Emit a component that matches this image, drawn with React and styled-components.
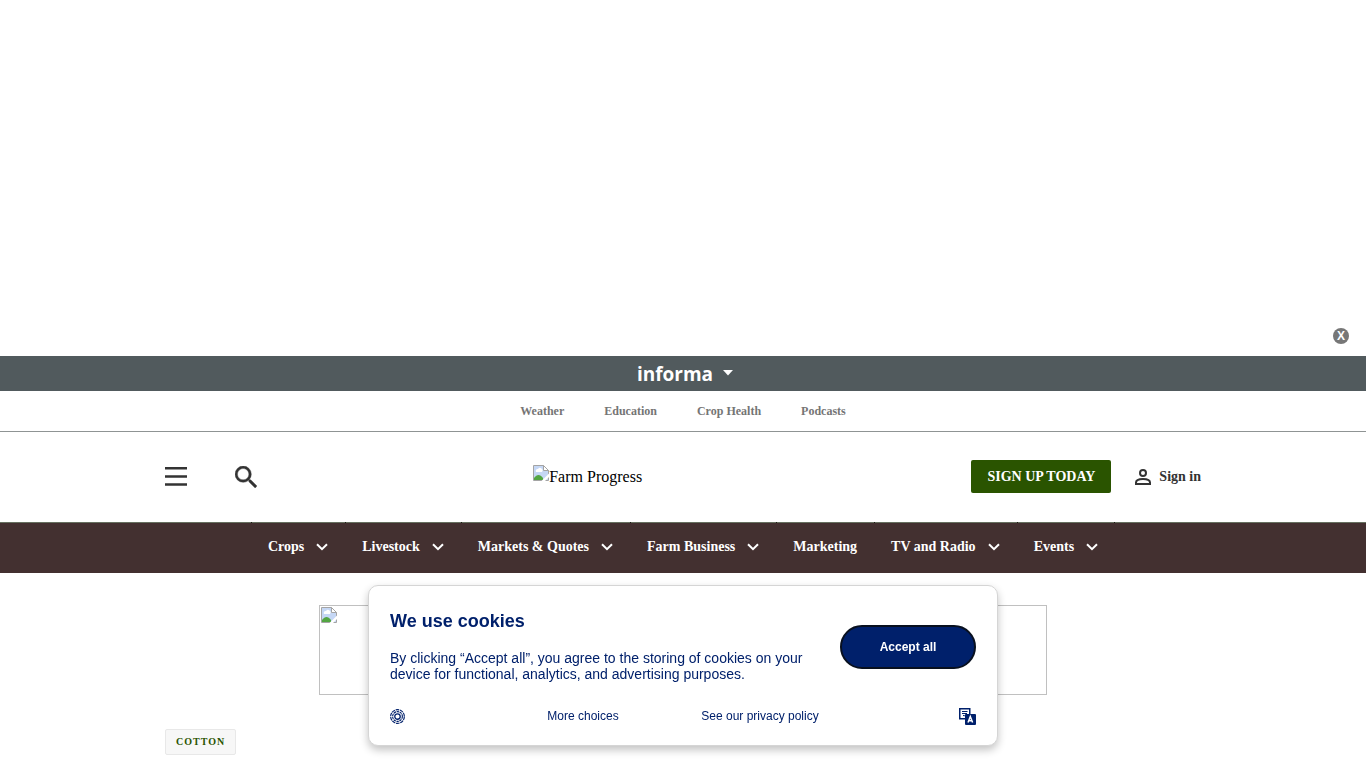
import React, { useState } from "react";
import styled, { createGlobalStyle } from "styled-components";

const GlobalStyle = createGlobalStyle`
  * {
    box-sizing: border-box;
  }
  body {
    margin: 0;
    background: #fff;
    color: #000;
    font-family: "Liberation Serif", serif;
    font-size: 16px;
  }
  a {
    color: inherit;
    text-decoration: none;
  }
  button {
    margin: 0;
    padding: 0;
    border: 0;
    background: none;
    color: inherit;
    font: inherit;
    cursor: pointer;
  }
  svg {
    display: block;
    flex: none;
  }
`;

const Billboard = styled.aside`
  display: flex;
  align-items: flex-end;
  justify-content: flex-end;
  min-height: 356px;
  padding: 12px 17px;
`;

const CloseButton = styled.button`
  width: 16px;
  height: 16px;
  border-radius: 50%;
  background: #777;
  color: #fff;
  font-family: "Liberation Sans", sans-serif;
  font-size: 12px;
  font-weight: 700;
  line-height: 16px;
  text-align: center;
`;

const InformaBar = styled.div`
  display: flex;
  justify-content: center;
  background: #515a5d;
  color: #fff;
`;

const InformaToggle = styled.button`
  display: flex;
  align-items: center;
  gap: 10px;
  height: 35px;
  padding-left: 4px;
  font-family: "Open Sans", sans-serif;
  font-size: 19px;
  font-weight: 700;
  line-height: 34px;
`;

const TopLinks = styled.nav`
  display: flex;
  justify-content: center;
  gap: 40px;
  border-bottom: 1px solid #8f9494;
  color: #757575;
  font-size: 12px;
  font-weight: 700;
  line-height: 40px;
`;

const Container = styled.div`
  max-width: 1036px;
  margin: 0 auto;
`;

const Header = styled(Container)`
  display: flex;
  align-items: center;
  justify-content: space-between;
  padding: 28px 0 29px;
`;

const HeaderGroup = styled.div`
  display: flex;
  align-items: center;
  gap: ${props => props.gap};
  color: #333;
`;

const LogoLink = styled.a`
  display: flex;
  width: 162px;
  line-height: 24px;
`;

const SignUp = styled.a`
  padding: 0 16px;
  border-radius: 2px;
  background: #2a5400;
  color: #fff;
  font-size: 14px;
  font-weight: 700;
  line-height: 33px;
`;

const SignIn = styled.a`
  display: flex;
  align-items: center;
  gap: 8px;
  font-size: 14px;
  font-weight: 700;
`;

const MainNav = styled.nav`
  display: flex;
  justify-content: center;
  border-top: 1px solid #66705f;
  background: #433030;
  color: #fff;
`;

const NavItem = styled.div`
  position: relative;
  display: flex;
  align-items: center;
  gap: 12px;
  padding: 0 17px 2px;
  font-size: 14px;
  font-weight: 700;
  line-height: 48px;
  &::before,
  &:last-child::after {
    content: "";
    position: absolute;
    top: -1px;
    left: 0;
    width: 1px;
    height: 1px;
    background: #1d1a14;
  }
  &:last-child::after {
    right: 0;
    left: auto;
  }
`;

const Leaderboard = styled.div`
  max-width: 728px;
  height: 90px;
  margin: 32px auto 34px;
  padding: 1px;
  border: 1px solid #c0c0c0;
`;

const Tag = styled.a`
  display: inline-block;
  padding: 0 10px;
  border: 1px solid #e8e8e8;
  border-radius: 2px;
  background: #f7f7f7;
  color: #2a5400;
  font-size: 10px;
  font-weight: 700;
  letter-spacing: 1px;
  line-height: 24px;
`;

const CookieDialog = styled.section`
  position: fixed;
  bottom: 22px;
  left: 50%;
  width: 630px;
  max-width: 100%;
  padding: 21px 21px 20px;
  transform: translateX(-50%);
  border: 1px solid #d5d5d5;
  border-radius: 10px;
  background: #fff;
  box-shadow: 0 4px 8px rgba(0, 0, 0, 0.24);
  color: #00206b;
  font-family: "Liberation Sans", sans-serif;
`;

const CookieBody = styled.div`
  display: flex;
  align-items: center;
  justify-content: space-between;
  min-height: 80px;
`;

const CookieText = styled.div`
  align-self: flex-start;
  max-width: 430px;
  h2 {
    margin: 0 0 15px;
    font-size: 18px;
    font-weight: 700;
    line-height: 28px;
  }
  p {
    margin: 0;
    font-size: 14px;
    line-height: 16px;
  }
`;

const AcceptButton = styled.button`
  width: 136px;
  height: 44px;
  border: 2px solid #08101f;
  border-radius: 22px;
  background: #00206b;
  color: #fff;
  font-size: 12px;
  font-weight: 700;
`;

const CookieFooter = styled.div`
  display: grid;
  grid-template-columns: 116px 154px 200px 1fr;
  align-items: center;
  margin-top: 20px;
  font-size: 12px;
  line-height: 18px;
`;

const FooterAction = styled.button`
  justify-self: ${props => props.$align || "center"};
`;

const PolicyLink = styled.a`
  justify-self: center;
`;

const Chevron = () => (
  <svg width="12" height="9" viewBox="0 0 12 9" fill="none">
    <path d="M1 1.200 6 6.200 11 1.200" stroke="#fff" strokeWidth="2" />
  </svg>
);

const BrokenImage = () => (
  <svg width="16" height="16" viewBox="0 0 16 16">
    <path d="M.5 .5h10l5 5v10H.5z" fill="#c5d7f5" stroke="#a4a4a4" />
    <path d="M3 7a2 2 0 0 1 2-3 2.500 2.500 0 0 1 4 3z" fill="#fff" />
    <path d="M1 15v-2c3-4 6-4 9 0v2z" fill="#53a642" />
    <path d="M10.500 .5v5h5z" fill="#fff" stroke="#a4a4a4" />
    <path d="M16 8.500 8.500 16H12l4-4z" fill="#fff" />
  </svg>
);

const MenuIcon = () => (
  <svg width="22" height="19" viewBox="0 0 22 19" fill="#333">
    <path d="M0 0h22v2.500H0zM0 8.200h22v2.500H0zM0 16.300h22v2.500H0z" />
  </svg>
);

const SearchIcon = () => (
  <svg width="22" height="22" viewBox="3 3 17.500 17.500" fill="#333" stroke="#333" strokeWidth=".3">
    <path d="M15.500 14h-.79l-.28-.27A6.471 6.471 0 0 0 16 9.500 6.500 6.500 0 1 0 9.500 16c1.610 0 3.090-.59 4.230-1.570l.27.28v.79l5 4.990L20.490 19l-4.990-5zm-6 0C7.010 14 5 11.990 5 9.500S7.010 5 9.500 5 14 7.010 14 9.500 11.990 14 9.500 14z" />
  </svg>
);

const UserIcon = () => (
  <svg width="16" height="16" viewBox="0 0 16 16" fill="none" stroke="#333" strokeWidth="2">
    <circle cx="8" cy="4" r="3" />
    <path d="M1 15v-1.500C1 11 5 10 8 10s7 1 7 3.500V15z" />
  </svg>
);

const SettingsIcon = () => (
  <svg width="15" height="15" viewBox="0 0 16 16" fill="none" stroke="#00206b">
    <circle cx="8" cy="8" r="7.300" strokeWidth="1.200" strokeDasharray="3.800 .8" />
    <circle cx="8" cy="8" r="5.200" strokeWidth="1.200" strokeDasharray="2.600 .67" />
    <circle cx="8" cy="8" r="2.900" strokeWidth="1.400" />
  </svg>
);

const LanguageIcon = () => (
  <svg width="17" height="17" viewBox="0 0 17 17" fill="none">
    <rect x=".75" y=".75" width="10" height="10" stroke="#00206b" strokeWidth="1.500" />
    <path d="M3 3.500h5.500M3 5.500h5M4 7.500c2 .5 3.500 0 3.500-2" stroke="#00206b" />
    <rect x="6" y="6" width="11" height="11" rx="1" fill="#00206b" />
    <path d="m9 14.500 2.300-6 2.300 6M9.800 12.700h3" stroke="#fff" strokeWidth="1.500" />
  </svg>
);

const topLinks = ["Weather", "Education", "Crop Health", "Podcasts"];

const navItems = [
  { label: "Crops", menu: true },
  { label: "Livestock", menu: true },
  { label: "Markets & Quotes", menu: true },
  { label: "Farm Business", menu: true },
  { label: "Marketing", menu: false },
  { label: "TV and Radio", menu: true },
  { label: "Events", menu: true }
];

export default function App() {
  const [showBillboard, setShowBillboard] = useState(true);
  const [showCookies, setShowCookies] = useState(true);

  return (
    <>
      <GlobalStyle />
      {showBillboard && (
        <Billboard>
          <CloseButton onClick={() => setShowBillboard(false)}>X</CloseButton>
        </Billboard>
      )}
      <InformaBar>
        <InformaToggle>
          informa
          <svg width="10" height="8" viewBox="0 0 10 8" fill="#fff">
            <path d="M0 0h10L5 5.500z" />
          </svg>
        </InformaToggle>
      </InformaBar>
      <TopLinks>
        {topLinks.map(label => (
          <a href="#" key={label}>
            {label}
          </a>
        ))}
      </TopLinks>
      <Header as="header">
        <HeaderGroup gap="48px">
          <button aria-label="Menu">
            <MenuIcon />
          </button>
          <button aria-label="Search">
            <SearchIcon />
          </button>
        </HeaderGroup>
        <LogoLink href="#">
          <BrokenImage />
          Farm Progress
        </LogoLink>
        <HeaderGroup gap="24px">
          <SignUp href="#">SIGN UP TODAY</SignUp>
          <SignIn href="#">
            <UserIcon />
            Sign in
          </SignIn>
        </HeaderGroup>
      </Header>
      <MainNav>
        {navItems.map(item => (
          <NavItem key={item.label}>
            <a href="#">{item.label}</a>
            {item.menu && (
              <button aria-label={`${item.label} menu`}>
                <Chevron />
              </button>
            )}
          </NavItem>
        ))}
      </MainNav>
      <main>
        <Leaderboard>
          <BrokenImage />
        </Leaderboard>
        <Container>
          <Tag href="#">COTTON</Tag>
        </Container>
      </main>
      {showCookies && (
        <CookieDialog role="dialog" aria-labelledby="cookie-title">
          <CookieBody>
            <CookieText>
              <h2 id="cookie-title">We use cookies</h2>
              <p>
                By clicking “Accept all”, you agree to the storing of cookies on
                your device for functional, analytics, and advertising purposes.
              </p>
            </CookieText>
            <AcceptButton onClick={() => setShowCookies(false)}>
              Accept all
            </AcceptButton>
          </CookieBody>
          <CookieFooter>
            <FooterAction $align="start" aria-label="Cookie settings">
              <SettingsIcon />
            </FooterAction>
            <FooterAction>More choices</FooterAction>
            <PolicyLink href="#">See our privacy policy</PolicyLink>
            <FooterAction $align="end" aria-label="Language">
              <LanguageIcon />
            </FooterAction>
          </CookieFooter>
        </CookieDialog>
      )}
    </>
  );
}
